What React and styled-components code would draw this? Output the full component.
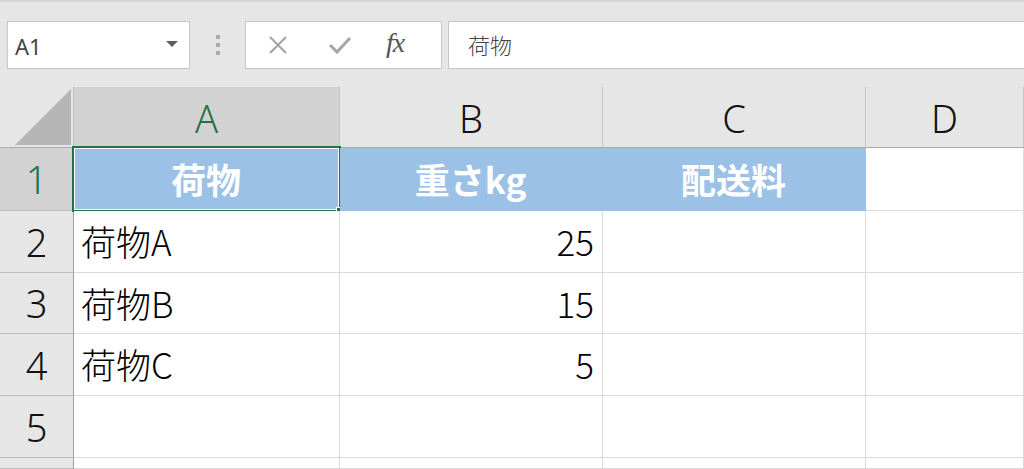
import React from 'react'
import styled, { createGlobalStyle } from 'styled-components'

const GlobalStyle = createGlobalStyle`
  html, body {
    margin: 0;
    padding: 0;
    background: #ffffff;
    overflow: hidden;
  }
  body {
    font-family: "Noto Sans CJK JP", "Noto Sans", sans-serif;
  }
`

const Window = styled.div`
  width: 1024px;
  height: 469px;
  display: flex;
  flex-direction: column;
  overflow: hidden;
  background: #ffffff;
`

const Toolbar = styled.div`
  height: 87px;
  flex: none;
  box-sizing: border-box;
  border-top: 2px solid #d4d4d4;
  background: #e6e6e6;
  display: flex;
  align-items: flex-start;
  padding: 19px 0 0 7px;
`

const NameBox = styled.div`
  width: 183px;
  height: 48px;
  box-sizing: border-box;
  background: #ffffff;
  border: 1px solid #c6c6c6;
  display: flex;
  align-items: center;
  justify-content: space-between;
  padding: 2px 11px 0 7px;
  font-family: "Noto Sans", sans-serif;
  font-size: 22px;
  color: #444444;
`

const DropArrow = styled.span`
  width: 0;
  height: 0;
  border-left: 6px solid transparent;
  border-right: 6px solid transparent;
  border-top: 6px solid #5f5f5f;
  margin-top: -4px;
`

const Grip = styled.div`
  width: 55px;
  height: 48px;
  display: flex;
  flex-direction: column;
  align-items: center;
  justify-content: center;
  gap: 4px;
  span {
    width: 4px;
    height: 4px;
    background: #a9a9a9;
  }
`

const FxBox = styled.div`
  width: 197px;
  height: 48px;
  box-sizing: border-box;
  background: #ffffff;
  border: 1px solid #c6c6c6;
  display: flex;
  align-items: center;
  padding-left: 22px;
  gap: 40px;
`

const FxText = styled.span`
  font-family: "Liberation Serif", serif;
  font-style: italic;
  font-size: 28px;
  color: #555555;
  margin-left: -6px;
  margin-top: -4px;
  letter-spacing: -1px;
`

const FormulaInput = styled.div`
  flex: 1;
  height: 48px;
  margin-left: 6px;
  box-sizing: border-box;
  background: #ffffff;
  border: 1px solid #c6c6c6;
  border-right: none;
  display: flex;
  align-items: center;
  padding: 0 0 2px 19px;
  font-size: 22px;
  font-weight: 300;
  color: #454545;
`

const Sheet = styled.div`
  flex: 1;
  display: grid;
  grid-template-columns: 74px 266px 263px 263px 1fr;
  grid-template-rows: 61px 63px 62px 61px 62px 62px 1fr;
`

const Corner = styled.div`
  background: #e6e6e6;
  border-right: 1px solid #bdbdbd;
  border-bottom: 1px solid #ababab;
  display: flex;
  align-items: flex-end;
  justify-content: flex-end;
  padding: 0 2px 2px 0;
`

const ColHead = styled.div`
  background: ${(p) => (p.$active ? '#d2d2d2' : '#e6e6e6')};
  color: ${(p) => (p.$active ? '#217346' : '#111111')};
  border-right: 1px solid #c4c4c4;
  border-bottom: 1px solid ${(p) => (p.$active ? '#217346' : '#ababab')};
  box-shadow: ${(p) => (p.$active ? 'inset 0 -1px 0 #217346' : 'none')};
  display: flex;
  align-items: center;
  justify-content: center;
  font-family: "Noto Sans", sans-serif;
  font-weight: 300;
  font-size: 38px;
  padding-top: 2px;
  box-sizing: border-box;
`

const RowHead = styled.div`
  background: ${(p) => (p.$active ? '#d2d2d2' : '#e6e6e6')};
  color: ${(p) => (p.$active ? '#217346' : '#111111')};
  border-right: 1px solid ${(p) => (p.$active ? '#217346' : '#9e9e9e')};
  border-bottom: 1px solid #bdbdbd;
  display: flex;
  align-items: center;
  justify-content: center;
  font-family: "Noto Sans", sans-serif;
  font-weight: 300;
  font-size: 38px;
  box-sizing: border-box;
`

const Cell = styled.div`
  position: relative;
  box-sizing: border-box;
  border-right: 1px solid ${(p) => (p.$fill ? '#9bc2e6' : '#dadada')};
  border-bottom: 1px solid ${(p) => (p.$fill ? '#9bc2e6' : '#dadada')};
  background: ${(p) => (p.$fill ? '#9bc2e6' : '#ffffff')};
  color: ${(p) => (p.$fill ? '#ffffff' : '#000000')};
  font-weight: ${(p) => (p.$fill ? 700 : 300)};
  font-size: 35px;
  display: flex;
  align-items: center;
  justify-content: ${(p) => p.$align || 'flex-start'};
  padding: 0 8px 2px 7px;
  white-space: nowrap;
`

const Selection = styled.div`
  position: absolute;
  left: -2px;
  top: -2px;
  right: -2px;
  bottom: -2px;
  border: 2px solid #217346;
  box-shadow: inset 0 0 0 1px #ffffff;
  pointer-events: none;
`

const Handle = styled.div`
  position: absolute;
  right: -6px;
  bottom: -6px;
  width: 7px;
  height: 7px;
  background: #217346;
  border: 1px solid #ffffff;
`

const columns = ['A', 'B', 'C', 'D']

// row 6 is only a sliver at the bottom edge, so its number is left out
const rows = [
  { n: 1, label: '1', cells: ['荷物', '重さkg', '配送料', ''], header: true },
  { n: 2, label: '2', cells: ['荷物A', 25, '', ''] },
  { n: 3, label: '3', cells: ['荷物B', 15, '', ''] },
  { n: 4, label: '4', cells: ['荷物C', 5, '', ''] },
  { n: 5, label: '5', cells: ['', '', '', ''] },
  { n: 6, label: '', cells: ['', '', '', ''] },
]

function CornerMark() {
  return (
    <svg width="56" height="56" viewBox="0 0 56 56">
      <polygon points="56,0 56,56 0,56" fill="#b5b5b5" />
    </svg>
  )
}

function CloseIcon() {
  return (
    <svg width="20" height="20" viewBox="0 0 20 20">
      <path d="M2 2 L18 18 M18 2 L2 18" stroke="#a6a6a6" strokeWidth="2.2" fill="none" />
    </svg>
  )
}

function CheckIcon() {
  return (
    <svg width="24" height="20" viewBox="0 0 24 20">
      <path d="M2 10 L9 17 L22 3" stroke="#a6a6a6" strokeWidth="3" fill="none" />
    </svg>
  )
}

function App() {
  return (
    <Window>
      <GlobalStyle />
      <Toolbar>
        <NameBox>
          A1
          <DropArrow />
        </NameBox>
        <Grip>
          <span />
          <span />
          <span />
        </Grip>
        <FxBox>
          <CloseIcon />
          <CheckIcon />
          <FxText>fx</FxText>
        </FxBox>
        <FormulaInput>荷物</FormulaInput>
      </Toolbar>
      <Sheet>
        <Corner>
          <CornerMark />
        </Corner>
        {columns.map((c) => (
          <ColHead key={c} $active={c === 'A'}>
            {c}
          </ColHead>
        ))}
        {rows.map((row) => (
          <React.Fragment key={row.n}>
            <RowHead $active={row.n === 1}>{row.label}</RowHead>
            {row.cells.map((v, i) => (
              <Cell
                key={i}
                $fill={row.header && i < 3}
                $align={row.header ? 'center' : typeof v === 'number' ? 'flex-end' : 'flex-start'}
              >
                {v}
                {row.n === 1 && i === 0 && (
                  <Selection>
                    <Handle />
                  </Selection>
                )}
              </Cell>
            ))}
          </React.Fragment>
        ))}
      </Sheet>
    </Window>
  )
}

export default App
